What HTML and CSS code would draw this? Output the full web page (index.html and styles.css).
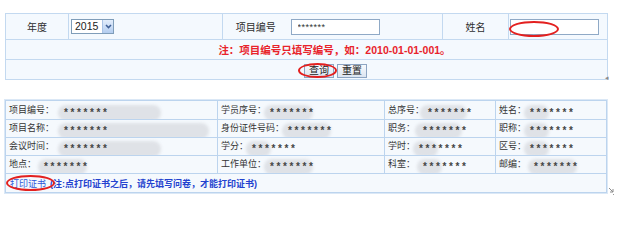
FILE: index.html
```html
<!DOCTYPE html>
<html lang="zh-CN">
<head>
<meta charset="utf-8">
<title>证书打印</title>
<link rel="stylesheet" href="styles.css">
</head>
<body>
<div class="page">
  <table class="search">
    <colgroup>
      <col class="w1"><col class="w2"><col class="w3"><col class="w4"><col class="w5"><col class="w6">
    </colgroup>
    <tr class="r1">
      <td class="lbl">年度</td>
      <td class="fld">
        <div class="select"><span class="sel-text">2015</span><span class="sel-btn"><svg width="7" height="5" viewBox="0 0 7 5"><path d="M1 1 L3.5 3.6 L6 1" fill="none" stroke="#3f5f95" stroke-width="1.5"/></svg></span></div>
      </td>
      <td class="lbl no-right">项目编号</td>
      <td class="fld no-left"><input class="input pw" type="text" value="*******"></td>
      <td class="lbl">姓名</td>
      <td class="fld"><div class="field-wrap"><input class="input" type="text" value=""><span class="ring ring-name"></span></div></td>
    </tr>
    <tr class="r2">
      <td colspan="6" class="note">注：项目编号只填写编号，如：2010-01-01-001。</td>
    </tr>
    <tr class="r3">
      <td colspan="6" class="btns">
        <div class="btn-row">
          <div class="btn-wrap"><button class="btn">查询</button><span class="ring ring-query"></span></div>
          <button class="btn">重置</button>
        </div>
      </td>
    </tr>
  </table>

  <table class="info">
    <colgroup>
      <col class="i1"><col class="i2"><col class="i3"><col class="i4">
    </colgroup>
    <tr>
      <td>项目编号：<span class="val v-l1">*******</span></td>
      <td>学员序号：<span class="val v-m">*******</span></td>
      <td>总序号：<span class="val v-l2">*******</span></td>
      <td>姓名：<span class="val v-s">*******</span></td>
    </tr>
    <tr>
      <td>项目名称：<span class="val v-xl">*******</span></td>
      <td>身份证件号码：<span class="val v-m">*******</span></td>
      <td>职务：<span class="val v-l2 gap">*******</span></td>
      <td>职称：<span class="val v-s">*******</span></td>
    </tr>
    <tr>
      <td>会议时间：<span class="val v-l1">*******</span></td>
      <td>学分：<span class="val v-s">*******</span></td>
      <td>学时：<span class="val v-s">*******</span></td>
      <td>区号：<span class="val v-s">*******</span></td>
    </tr>
    <tr>
      <td>地点：<span class="val v-m gap">*******</span></td>
      <td>工作单位：<span class="val v-m">*******</span></td>
      <td>科室：<span class="val v-s gap">*******</span></td>
      <td>邮编：<span class="val v-m gap">*******</span></td>
    </tr>
    <tr class="last">
      <td colspan="4"><span class="print-wrap"><a class="print-link" href="#">打印证书</a><span class="ring ring-print"></span></span><span class="print-note">(注:点打印证书之后，请先填写问卷，才能打印证书)</span></td>
    </tr>
  </table>

  <span class="grip1">◂</span>
  <span class="grip2"><svg width="7" height="8" viewBox="0 0 7 8"><path d="M1 1 L5 5 M5 2 L5 5 L2 5" fill="none" stroke="#8a8a8a" stroke-width="1"/><rect x="5" y="7" width="1" height="1" fill="#999"/></svg></span>
</div>
</body>
</html>
```

FILE: styles.css
```css
* { box-sizing: border-box; }

html, body {
  margin: 0;
  background: #ffffff;
}

body {
  font-family: "Liberation Sans", "Noto Sans CJK SC", sans-serif;
  color: #333333;
}

.page {
  position: relative;
  width: 619px;
  height: 202px;
  padding: 13px 0 0 5px;
}

table {
  border-collapse: collapse;
  table-layout: fixed;
}

/* ---------- search table ---------- */
.search {
  width: 602px;
  background: #f4f9fe;
  border: 1px solid #c3d9f0;
}

.search td {
  border: 1px solid #c3d9f0;
  padding: 0;
}

.search td.no-right { border-right: 0; }
.search td.no-left { border-left: 0; }

.w1 { width: 63px; }
.w2 { width: 154px; }
.w3 { width: 66px; }
.w4 { width: 154px; }
.w5 { width: 66px; }
.w6 { width: 99px; }

.r1 td { height: 26px; }
.r2 td, .r3 td { height: 20px; }

.lbl {
  text-align: center;
  font-size: 10px;
  color: #2e2e2e;
}

.fld {
  vertical-align: middle;
}

.select {
  display: flex;
  align-items: stretch;
  width: 43px;
  height: 15px;
  margin-left: 2px;
  border: 1px solid #7f9db9;
  background: #ffffff;
}

.sel-text {
  font-size: 10.5px;
  line-height: 13px;
  padding-left: 3px;
  color: #222222;
}

.sel-btn {
  margin-left: auto;
  width: 11px;
  display: flex;
  align-items: center;
  justify-content: center;
  background: linear-gradient(#e2edfb, #b4cdf0);
  border-left: 1px solid #a9c3e6;
}

.input {
  display: block;
  width: 89px;
  height: 16px;
  margin: 0 0 0 2px;
  padding: 0 6px;
  border: 1px solid #8fa9c6;
  background: #ffffff;
  font-family: "Liberation Sans", sans-serif;
  font-size: 9px;
  letter-spacing: 0.5px;
  color: #333333;
  outline: none;
}

.field-wrap {
  position: relative;
  width: 92px;
}

.field-wrap .input {
  margin-left: 1px;
}

.note {
  text-align: center;
  padding-left: 56px !important;
  font-size: 10.5px;
  font-weight: bold;
  color: #e8232b;
}

.btns {
  padding-left: 58px !important;
}

.btn-row {
  display: flex;
  justify-content: center;
  gap: 3px;
  padding-top: 2px;
}

.btn-wrap {
  position: relative;
}

.btn {
  display: block;
  width: 30px;
  height: 14px;
  padding: 0;
  border: 1px solid #8da5c3;
  background: linear-gradient(#f8fafd, #dbe5f1);
  font-family: "Liberation Sans", "Noto Sans CJK SC", sans-serif;
  font-size: 10px;
  line-height: 12px;
  color: #222222;
}

/* red hand-drawn marks */
.ring {
  position: absolute;
  border: 2px solid #e3201f;
  border-radius: 50%;
  pointer-events: none;
}

.ring-name {
  left: 0;
  top: 2px;
  width: 50px;
  height: 16px;
}

.ring-query {
  left: -6px;
  top: -1px;
  width: 39px;
  height: 15px;
}

.ring-print {
  left: -4px;
  top: -4px;
  width: 49px;
  height: 16px;
}

/* ---------- info table ---------- */
.info {
  margin-top: 20px;
  width: 601px;
  background: #f5f9fd;
  border: 1px solid #a9c7ea;
  box-shadow: 0 0 0 1px #dbe8f6;
}

.i1 { width: 212px; }
.i2 { width: 167px; }
.i3 { width: 111px; }
.i4 { width: 111px; }

.info td {
  height: 18px;
  padding: 0 0 0 3px;
  border: 1px solid #bcd4ee;
  font-size: 9px;
  color: #333333;
  white-space: nowrap;
  overflow: hidden;
}

.info tr:first-child td { height: 19px; }
.info tr.last td { height: 19px; }

.val {
  position: relative;
  isolation: isolate;
  display: inline-block;
  margin-left: 4px;
  font-family: "Liberation Sans", sans-serif;
  font-size: 10px;
  font-weight: bold;
  letter-spacing: 2.6px;
  line-height: 10px;
  vertical-align: -3px;
  color: #444444;
}

.val::before {
  content: "";
  position: absolute;
  left: -6px;
  top: -3px;
  bottom: -3px;
  right: 0;
  background: #dfe2e7;
  border-radius: 8px;
  filter: blur(1.5px);
  z-index: -1;
}

.val.gap { margin-left: 8px; }

.v-l1 { margin-left: 10px; }
.v-l1::before { right: -52px; }
.v-xl { margin-left: 10px; }
.v-xl::before { right: -100px; }
.v-l2::before { right: 6px; left: -8px; }
.v-m::before { right: 2px; }
.v-s::before { right: 26px; }

.print-wrap {
  position: relative;
  margin-left: 1px;
}

.print-link {
  font-size: 9px;
  color: #2f57d9;
  text-decoration: none;
}

.print-note {
  margin-left: 4px;
  font-size: 9px;
  font-weight: bold;
  color: #2342cf;
}

.grip1 {
  position: absolute;
  left: 605px;
  top: 74px;
  font-size: 7px;
  color: #8a8a8a;
}

.grip2 {
  position: absolute;
  left: 608px;
  top: 187px;
  line-height: 0;
}
```
